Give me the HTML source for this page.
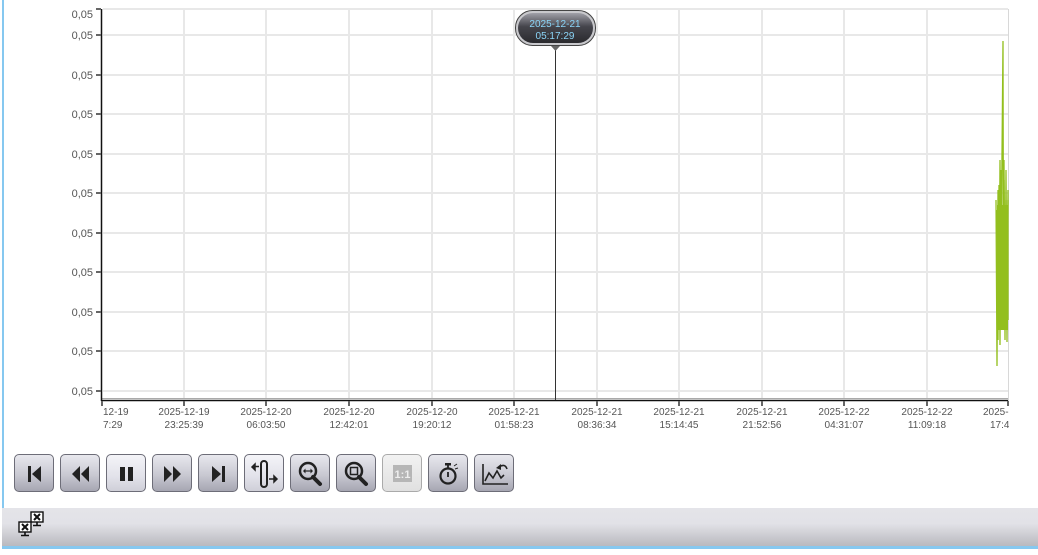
<!DOCTYPE html>
<html><head><meta charset="utf-8"><style>
body{margin:0;width:1038px;height:555px;background:#fff;position:relative;overflow:hidden;font-family:"Liberation Sans","DejaVu Sans",sans-serif}
.lb{position:absolute;left:2px;top:0;width:2px;height:549px;background:#86c8f0}
.bar{position:absolute;left:2px;top:508px;width:1036px;height:39px;background:linear-gradient(#e4e4e9 0%,#e2e2e7 40%,#b7b7bd 100%)}
.bb{position:absolute;left:2px;top:546px;width:1036px;height:3px;background:#86c8f0}
.btn{position:absolute;top:454px;width:40px;height:38px;border:1px solid #6d6d78;border-radius:5px;background:linear-gradient(#e8e8ee,#c9c9d2 55%,#a6a6b2);box-sizing:border-box}
.btn.l{background:linear-gradient(#f4f4f8,#e2e2ea 60%,#cfcfd8)}
.btn.d{border-color:#aaa;background:linear-gradient(#f2f2f2,#e0e0e0)}
.btn svg{position:absolute;left:0;top:1px}
</style></head><body>
<div class="lb"></div>
<svg width="1038" height="440" style="position:absolute;left:0;top:0" font-size="10" fill="#555">
<g stroke="#e8e8e8" stroke-width="2">
<line x1="103" y1="9" x2="1008" y2="9"/>
<line x1="103" y1="35" x2="1008" y2="35"/><line x1="103" y1="75" x2="1008" y2="75"/><line x1="103" y1="114" x2="1008" y2="114"/><line x1="103" y1="154" x2="1008" y2="154"/><line x1="103" y1="193" x2="1008" y2="193"/><line x1="103" y1="233" x2="1008" y2="233"/><line x1="103" y1="272" x2="1008" y2="272"/><line x1="103" y1="312" x2="1008" y2="312"/><line x1="103" y1="351" x2="1008" y2="351"/><line x1="103" y1="391" x2="1008" y2="391"/>
<line x1="184" y1="9" x2="184" y2="399"/><line x1="266" y1="9" x2="266" y2="399"/><line x1="349" y1="9" x2="349" y2="399"/><line x1="432" y1="9" x2="432" y2="399"/><line x1="514" y1="9" x2="514" y2="399"/><line x1="597" y1="9" x2="597" y2="399"/><line x1="679" y1="9" x2="679" y2="399"/><line x1="762" y1="9" x2="762" y2="399"/><line x1="844" y1="9" x2="844" y2="399"/><line x1="927" y1="9" x2="927" y2="399"/>
</g>
<line x1="1008.5" y1="9" x2="1008.5" y2="405" stroke="#d8d8d8" stroke-width="1"/>
<line x1="102" y1="398.5" x2="1008" y2="398.5" stroke="#aaa"/>
<line x1="102" y1="400.5" x2="1008" y2="400.5" stroke="#111" stroke-width="1.5"/>
<line x1="101.5" y1="9" x2="101.5" y2="401" stroke="#111" stroke-width="1.5"/>
<g stroke="#666" stroke-width="2">
<line x1="96" y1="9" x2="101" y2="9"/><line x1="96" y1="35" x2="101" y2="35"/><line x1="96" y1="75" x2="101" y2="75"/><line x1="96" y1="114" x2="101" y2="114"/><line x1="96" y1="154" x2="101" y2="154"/><line x1="96" y1="193" x2="101" y2="193"/><line x1="96" y1="233" x2="101" y2="233"/><line x1="96" y1="272" x2="101" y2="272"/><line x1="96" y1="312" x2="101" y2="312"/><line x1="96" y1="351" x2="101" y2="351"/><line x1="96" y1="391" x2="101" y2="391"/>
<line x1="102" y1="401" x2="102" y2="406"/><line x1="184" y1="401" x2="184" y2="406"/><line x1="266" y1="401" x2="266" y2="406"/><line x1="349" y1="401" x2="349" y2="406"/><line x1="432" y1="401" x2="432" y2="406"/><line x1="514" y1="401" x2="514" y2="406"/><line x1="597" y1="401" x2="597" y2="406"/><line x1="679" y1="401" x2="679" y2="406"/><line x1="762" y1="401" x2="762" y2="406"/><line x1="844" y1="401" x2="844" y2="406"/><line x1="927" y1="401" x2="927" y2="406"/><line x1="1008" y1="401" x2="1008" y2="406"/>
</g>
<g text-anchor="end" font-size="11">
<text x="93" y="18">0,05</text><text x="93" y="39">0,05</text><text x="93" y="79">0,05</text><text x="93" y="118">0,05</text><text x="93" y="158">0,05</text><text x="93" y="197">0,05</text><text x="93" y="237">0,05</text><text x="93" y="276">0,05</text><text x="93" y="316">0,05</text><text x="93" y="355">0,05</text><text x="93" y="395">0,05</text>
</g>
<g text-anchor="middle">
<text x="184" y="415">2025-12-19</text><text x="184" y="428">23:25:39</text>
<text x="266" y="415">2025-12-20</text><text x="266" y="428">06:03:50</text>
<text x="349" y="415">2025-12-20</text><text x="349" y="428">12:42:01</text>
<text x="432" y="415">2025-12-20</text><text x="432" y="428">19:20:12</text>
<text x="514" y="415">2025-12-21</text><text x="514" y="428">01:58:23</text>
<text x="597" y="415">2025-12-21</text><text x="597" y="428">08:36:34</text>
<text x="679" y="415">2025-12-21</text><text x="679" y="428">15:14:45</text>
<text x="762" y="415">2025-12-21</text><text x="762" y="428">21:52:56</text>
<text x="844" y="415">2025-12-22</text><text x="844" y="428">04:31:07</text>
<text x="927" y="415">2025-12-22</text><text x="927" y="428">11:09:18</text>
</g>
<text x="103" y="415">12-19</text><text x="103" y="428">7:29</text>
<text x="983" y="415">2025-</text><text x="990" y="428">17:4</text>
<rect x="1009" y="405" width="30" height="30" fill="#fff"/>
<line x1="555.5" y1="46" x2="555.5" y2="400" stroke="#333" stroke-width="1"/>
<defs><linearGradient id="tg" x1="0" y1="0" x2="0" y2="1"><stop offset="0" stop-color="#a0a0a8"/><stop offset="0.45" stop-color="#45454c"/><stop offset="1" stop-color="#2a2a2e"/></linearGradient></defs>
<rect x="515.5" y="10.5" width="80" height="35" rx="17" fill="#c8c8cc" stroke="#444"/>
<rect x="518" y="13" width="75" height="30" rx="15" fill="url(#tg)"/>
<path d="M551 46 L555.5 51 L560 46Z" fill="#666"/>
<text x="555" y="27" text-anchor="middle" fill="#8ad4f7">2025-12-21</text>
<text x="555" y="39" text-anchor="middle" fill="#8ad4f7">05:17:29</text>
<g stroke="#93bf1e" stroke-width="1.3" fill="none">
<polyline points="996,200 997,366 998,190 999,330 1000,160 1001,320 1002,155 1003,41 1003.5,300 1004,160 1005,340 1006,170 1007,330 1008,190 1008,320"/>
<polyline points="997,210 998,340 999,185 1000,345 1001,170 1002,330 1004,180 1005,320 1006,200 1007,342 1008,200"/>
<rect x="997" y="205" width="11" height="125" fill="#93bf1e" stroke="none"/>
</g>
</svg>

<div class="btn" style="left:14px"><svg width="40" height="36"><rect x="13" y="10" width="3" height="16" fill="#222"/><path d="M26 10 L17 18 L26 26Z" fill="#222"/></svg></div>
<div class="btn" style="left:60px"><svg width="40" height="36"><path d="M19 10 L11 18 L19 26Z M28 10 L20 18 L28 26Z" fill="#222"/></svg></div>
<div class="btn l" style="left:106px"><svg width="40" height="36"><rect x="13" y="11" width="5" height="14" fill="#222"/><rect x="21" y="11" width="5" height="14" fill="#222"/></svg></div>
<div class="btn" style="left:152px"><svg width="40" height="36"><path d="M11 10 L19 18 L11 26Z M20 10 L28 18 L20 26Z" fill="#222"/></svg></div>
<div class="btn" style="left:198px"><svg width="40" height="36"><path d="M13 10 L22 18 L13 26Z" fill="#222"/><rect x="23" y="10" width="3" height="16" fill="#222"/></svg></div>
<div class="btn l" style="left:244px"><svg width="40" height="36"><rect x="16" y="5" width="6" height="26" rx="3" fill="none" stroke="#222" stroke-width="2"/><path d="M7 11 L10 8 L10 14Z M10 10.5 H14" fill="#222" stroke="#222" stroke-width="1.5"/><path d="M32 23 L29 20 L29 26Z M24 23 H29" fill="#222" stroke="#222" stroke-width="1.5"/></svg></div>
<div class="btn" style="left:290px"><svg width="40" height="36"><circle cx="17" cy="15" r="8" fill="none" stroke="#222" stroke-width="2.5"/><path d="M22 21 L29 28" stroke="#222" stroke-width="4" stroke-linecap="round"/><path d="M12 15 L14.5 12.5 L14.5 17.5Z M22 15 L19.5 12.5 L19.5 17.5Z" fill="#222"/><path d="M14 15 H20" stroke="#222" stroke-width="1.2"/></svg></div>
<div class="btn" style="left:336px"><svg width="40" height="36"><circle cx="17" cy="15" r="8" fill="none" stroke="#222" stroke-width="2.5"/><path d="M22 21 L29 28" stroke="#222" stroke-width="4" stroke-linecap="round"/><rect x="13.5" y="11.5" width="7" height="7" fill="none" stroke="#222" stroke-width="1.5"/></svg></div>
<div class="btn d" style="left:382px"><svg width="40" height="36"><rect x="10" y="9" width="19" height="17" fill="#b6b6b6"/><text x="19.5" y="22" text-anchor="middle" font-size="11" font-weight="bold" fill="#eee">1:1</text></svg></div>
<div class="btn" style="left:428px"><svg width="40" height="36"><circle cx="19" cy="20" r="7.5" fill="none" stroke="#222" stroke-width="2.2"/><rect x="16" y="7" width="6" height="2.5" fill="#222"/><path d="M19 9 V12 M19 16 V21" stroke="#222" stroke-width="1.8"/><path d="M25 10 L28 8 M26 13 L29 12" stroke="#222" stroke-width="1"/></svg></div>
<div class="btn" style="left:474px"><svg width="40" height="36"><path d="M8 8 V28 H33" fill="none" stroke="#222" stroke-width="1.6"/><path d="M10 25 L14 17 L18 22 L22 15 L26 22 L29 19" fill="none" stroke="#222" stroke-width="1.6"/><path d="M24 11 Q30 7 32 13" fill="none" stroke="#222" stroke-width="1.6"/><path d="M21 12 L26 8 L26 14Z" fill="#222"/></svg></div>

<div class="bar"><svg width="40" height="40" style="position:absolute;left:14px;top:2px"><g stroke="#111" stroke-width="1.4" fill="#fff"><rect x="15" y="2" width="12" height="10"/><rect x="3" y="12" width="12" height="10"/></g><path d="M18 4 L24 10 M24 4 L18 10 M6 14 L12 20 M12 14 L6 20" stroke="#111" stroke-width="2"/><path d="M21 12 V15 M17 15.5 H25 M9 22 V25 M5 25.5 H13" stroke="#111" stroke-width="1.6"/></svg></div>
<div class="bb"></div>
</body></html>
